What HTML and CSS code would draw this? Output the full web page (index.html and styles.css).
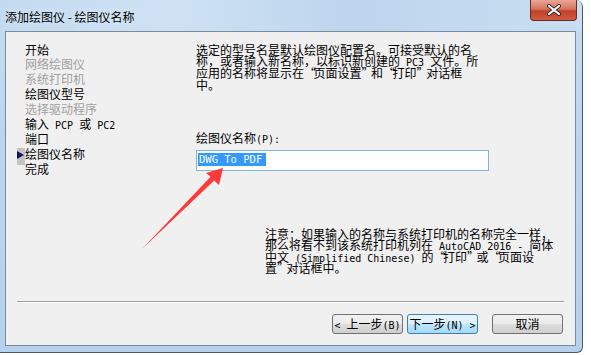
FILE: index.html
```html
<!DOCTYPE html>
<html lang="zh-CN">
<head>
	<meta charset="UTF-8">
	<title>添加绘图仪 - 绘图仪名称</title>
	<link rel="stylesheet" href="styles.css">
</head>
<body>
	<div class="window">
		<div class="titlebar">
			<span class="title">添加绘图仪 - 绘图仪名称</span>
			<span class="close">
				<svg width="16" height="12" viewBox="0 0 16 12">
					<path d="M3 2 L13 10 M13 2 L3 10" stroke="#3a2a28" stroke-width="4" stroke-linecap="round"/>
					<path d="M3 2 L13 10 M13 2 L3 10" stroke="#fff" stroke-width="2.2" stroke-linecap="round"/>
				</svg>
			</span>
		</div>
		<div class="client">
			<div class="main">
				<ul class="steps">
					<li>开始</li>
					<li class="off">网络绘图仪</li>
					<li class="off">系统打印机</li>
					<li>绘图仪型号</li>
					<li class="off">选择驱动程序</li>
					<li>输入<span class="en"> PCP </span>或<span class="en"> PC2</span></li>
					<li>端口</li>
					<li class="cur">绘图仪名称</li>
					<li>完成</li>
				</ul>
				<div class="panel">
					<p class="desc">选定的型号名是默认绘图仪配置名。可接受默认的名<br>称，或者输入新名称，以标识新创建的<span class="en"> PC3 </span>文件。所<br>应用的名称将显示在<span class="q">“</span>页面设置<span class="q">”</span>和<span class="q">“</span>打印<span class="q">”</span>对话框<br>中。</p>
					<div class="label">绘图仪名称<span class="en">(P):</span></div>
					<div class="input"><span class="sel">DWG To PDF</span></div>
					<p class="note">注意：如果输入的名称与系统打印机的名称完全一样，<br>那么将看不到该系统打印机列在<span class="en"> AutoCAD 2016 - </span>简体<br>中文<span class="en"> (Simplified Chinese) </span>的<span class="q">“</span>打印<span class="q">”</span>或<span class="q">“</span>页面设<br>置<span class="q">”</span>对话框中。</p>
				</div>
			</div>
			<div class="sep"></div>
			<div class="buttons">
				<div class="btn"><span class="en">&lt; </span>上一步<span class="en">(B)</span></div>
				<div class="btn focus">下一步<span class="en">(N) &gt;</span></div>
				<div class="btn cancel">取消</div>
			</div>
		</div>

		<!-- 截图上的标注箭头 -->
		<svg class="arrow" width="583" height="353" viewBox="0 0 583 353">
			<polygon points="142,249 210.6,176.8 206,173 223,168 219,185 214.2,180.4" fill="#ff3838"/>
		</svg>
	</div>
</body>
</html>
```
FILE: styles.css
```css
*{
	margin:0;
	padding:0;
	box-sizing:border-box;
}

body{
	background-color:#fff;
	font-family:"Noto Sans CJK SC", sans-serif;
	font-size:12px;
	color:#000;
}

/* 宋体里的西文是半角等宽, 6px 一个字 */
.en{
	font-family:"DejaVu Sans Mono", monospace;
	font-size:10px;
	line-height:0;
	white-space:pre;
}

.q{
	letter-spacing:-2.5px;
	line-height:0;
}

.window{
	width:583px;
	height:353px;
	position:relative;
	border-right:1px solid #4d5966;
	border-bottom:1px solid #4d5966;
	border-top-right-radius:7px;
	border-bottom-right-radius:6px;
	background:linear-gradient(180deg,#c6dcf1 0%,#bcd5ee 40%,#b6d1ec 100%);
	overflow:hidden;
}

.titlebar{
	height:31px;
	display:flex;
	align-items:flex-start;
	background:linear-gradient(90deg,#c3daf0 0%,#cfe2f4 30%,#bdd5ed 60%,#c9def2 100%);
}

.title{
	margin:9px 0 0 5px;
	line-height:15px;
	text-shadow:0 0 6px #e8f2fb;
}

.close{
	margin-left:auto;
	margin-right:5px;
	width:47px;
	height:21px;
	display:flex;
	align-items:center;
	justify-content:center;
	border:1px solid #6b2a22;
	border-top:none;
	border-radius:0 0 4px 4px;
	background:linear-gradient(180deg,#e9a596 0%,#d67560 45%,#c3402a 55%,#cf5a41 100%);
}

.client{
	width:571px;
	height:315px;
	margin-left:5px;
	border:1px solid #7d8a97;
	background-color:#f0f0f0;
	display:flex;
	flex-direction:column;
}

.main{
	height:269px;
	display:flex;
}

.steps{
	list-style:none;
	width:190px;
	padding:10.5px 0 0 19px;
	line-height:14.9px;
}

.steps .off{
	color:#a0a0a0;
}

.steps .cur{
	position:relative;
}

/* 当前步骤前的小三角 */
.steps .cur::before{
	content:"";
	position:absolute;
	left:-8px;
	top:1px;
	width:8px;
	height:17px;
	background-color:#c3c3c3;
}

.steps .cur::after{
	content:"";
	position:absolute;
	left:-8px;
	top:4px;
	border-left:7px solid #10106e;
	border-top:4px solid transparent;
	border-bottom:4px solid transparent;
}

.panel{
	flex:1;
	padding-top:11.6px;
}

.desc{
	line-height:11.8px;
}

.label{
	margin-top:40px;
	line-height:14px;
}

.input{
	width:293px;
	height:21px;
	margin-top:5px;
	border:1px solid #82b5e3;
	background-color:#fff;
	padding:2px 0 0 1px;
}

.sel{
	display:inline-block;
	background-color:#3399ff;
	color:#fff;
	font-family:"DejaVu Sans Mono", monospace;
	font-size:10.5px;
	line-height:13px;
	padding:0 4px 0 1px;
	vertical-align:top;
}

.note{
	margin:57px 0 0 69px;
	line-height:11.5px;
}

.sep{
	margin:0 11px;
	border-top:1px solid #a0a0a0;
	border-bottom:1px solid #fff;
}

.buttons{
	display:flex;
	justify-content:flex-end;
	padding:11px 12px 0 0;
	gap:4px;
}

.btn{
	width:71px;
	height:20px;
	border:1px solid #707070;
	border-radius:3px;
	background:linear-gradient(180deg,#f2f2f2 0%,#ebebeb 50%,#dddddd 51%,#cfcfcf 100%);
	text-align:center;
	line-height:18px;
}

.btn.focus{
	border-color:#3c7fb1;
	background:linear-gradient(180deg,#eaf6fd 0%,#d9f0fc 50%,#bee6fd 51%,#a7d9f5 100%);
}

.btn.cancel{
	margin-left:10px;
}

.arrow{
	position:absolute;
	left:0;
	top:0;
	pointer-events:none;
}
```
